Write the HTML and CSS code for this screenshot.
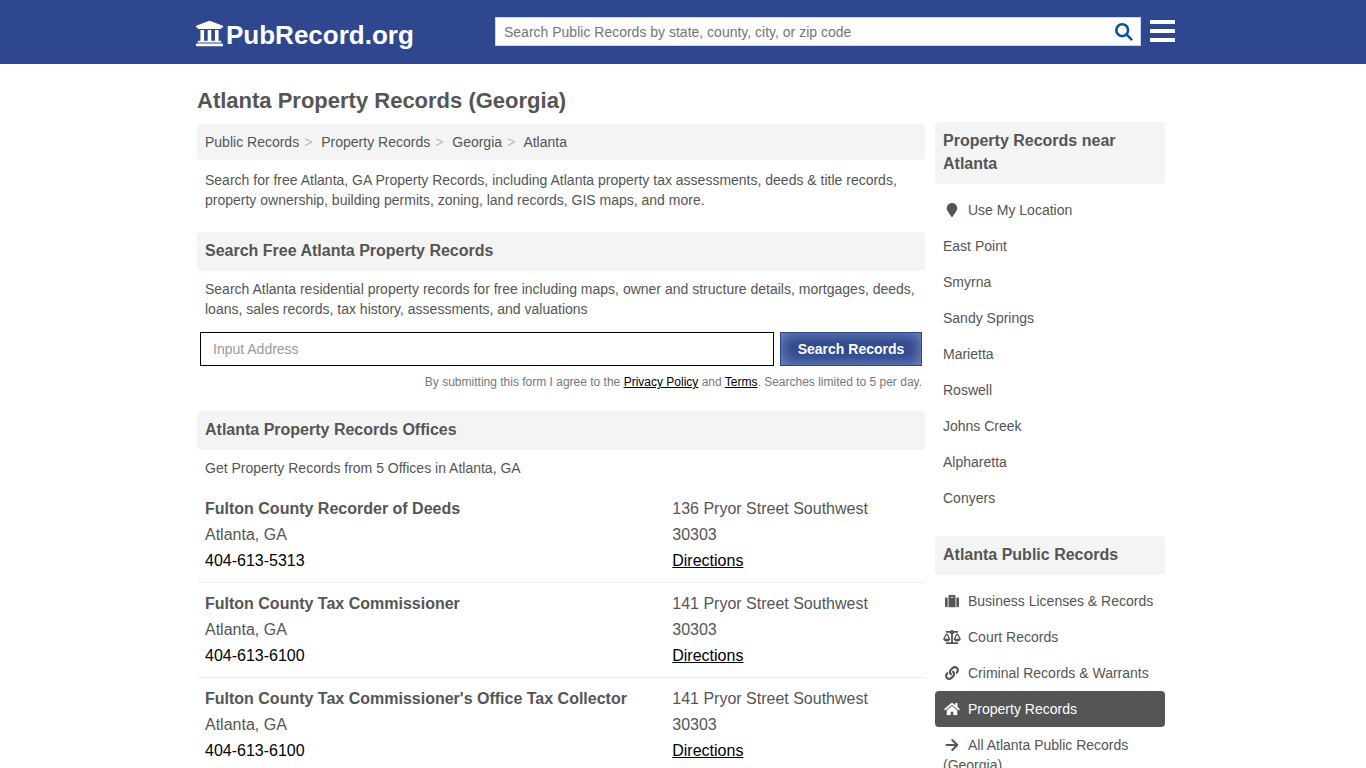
FILE: index.html
```html
<!DOCTYPE html>
<html lang="en">
<head>
<meta charset="utf-8">
<meta name="viewport" content="width=device-width, initial-scale=1">
<title>Atlanta Property Records (Georgia)</title>
<link rel="stylesheet" href="styles.css">
</head>
<body>
<header class="site-header">
  <div class="header-inner">
    <a class="logo" href="#">
      <svg class="logo-icon" viewBox="0 0 512 512" aria-hidden="true"><path d="M496 128v16a8 8 0 0 1-8 8h-24v12c0 6.627-5.373 12-12 12H60c-6.627 0-12-5.373-12-12v-12H24a8 8 0 0 1-8-8v-16a8 8 0 0 1 4.941-7.392l232-88a7.996 7.996 0 0 1 6.118 0l232 88A8 8 0 0 1 496 128zm-24 304H40c-13.255 0-24 10.745-24 24v16a8 8 0 0 0 8 8h464a8 8 0 0 0 8-8v-16c0-13.255-10.745-24-24-24zM96 192v192H60c-6.627 0-12 5.373-12 12v20h416v-20c0-6.627-5.373-12-12-12h-36V192h-64v192h-64V192h-64v192h-64V192H96z"/></svg>
      <span>PubRecord.org</span>
    </a>
    <form class="site-search" role="search">
      <input class="site-search-input" type="text" aria-label="Search public records" placeholder="Search Public Records by state, county, city, or zip code">
      <button class="site-search-button" type="button" aria-label="Search">
        <svg class="search-icon" viewBox="0 0 18 18" aria-hidden="true"><circle cx="7.2" cy="7.2" r="5.9"/><path d="M11.7 11.7l4.6 4.6"/></svg>
      </button>
    </form>
    <button class="menu-button" type="button" aria-label="Menu">
      <svg class="menu-icon" viewBox="0 0 25 22" aria-hidden="true"><rect width="25" height="4" rx=".6"/><rect y="9" width="25" height="4" rx=".6"/><rect y="18" width="25" height="4" rx=".6"/></svg>
    </button>
  </div>
</header>

<div class="page">
  <h1 class="page-title">Atlanta Property Records (Georgia)</h1>
  <div class="columns">
    <main class="content">
      <nav class="breadcrumb" aria-label="Breadcrumb">
        <a href="#">Public Records</a><span class="crumb-sep">&gt;</span>
        <a href="#">Property Records</a><span class="crumb-sep">&gt;</span>
        <a href="#">Georgia</a><span class="crumb-sep">&gt;</span>
        <a href="#">Atlanta</a>
      </nav>
      <p class="text">Search for free Atlanta, GA Property Records, including Atlanta property tax assessments, deeds &amp; title records, property ownership, building permits, zoning, land records, GIS maps, and more.</p>

      <section class="search-section">
        <h2 class="heading">Search Free Atlanta Property Records</h2>
        <p class="text">Search Atlanta residential property records for free including maps, owner and structure details, mortgages, deeds, loans, sales records, tax history, assessments, and valuations</p>
        <form class="address-form">
          <input class="address-input" type="text" aria-label="Address" placeholder="Input Address">
          <button class="address-button" type="button">Search Records</button>
        </form>
        <p class="terms">By submitting this form I agree to the <a href="#">Privacy Policy</a> and <a href="#">Terms</a>. Searches limited to 5 per day.</p>
      </section>

      <section class="offices">
        <h2 class="heading">Atlanta Property Records Offices</h2>
        <p class="text">Get Property Records from 5 Offices in Atlanta, GA</p>
        <div class="office-list">
          <article class="office">
            <div><h3 class="office-name">Fulton County Recorder of Deeds</h3><p>Atlanta, GA</p><a class="phone" href="tel:4046135313">404-613-5313</a></div>
            <div><p>136 Pryor Street Southwest</p><p>30303</p><a class="directions" href="#">Directions</a></div>
          </article>
          <article class="office">
            <div><h3 class="office-name">Fulton County Tax Commissioner</h3><p>Atlanta, GA</p><a class="phone" href="tel:4046136100">404-613-6100</a></div>
            <div><p>141 Pryor Street Southwest</p><p>30303</p><a class="directions" href="#">Directions</a></div>
          </article>
          <article class="office">
            <div><h3 class="office-name">Fulton County Tax Commissioner's Office Tax Collector</h3><p>Atlanta, GA</p><a class="phone" href="tel:4046136100">404-613-6100</a></div>
            <div><p>141 Pryor Street Southwest</p><p>30303</p><a class="directions" href="#">Directions</a></div>
          </article>
        </div>
      </section>
    </main>

    <aside class="sidebar">
      <h2 class="heading">Property Records near Atlanta</h2>
      <nav class="side-nav" aria-label="Nearby">
        <a href="#"><svg class="side-icon" viewBox="-64 0 512 512" aria-hidden="true"><path d="M172.268 501.67C26.97 291.031 0 269.413 0 192 0 85.961 85.961 0 192 0s192 85.961 192 192c0 77.413-26.97 99.031-172.268 309.67-9.535 13.774-29.93 13.773-39.464 0z"/></svg>Use My Location</a>
        <a href="#">East Point</a>
        <a href="#">Smyrna</a>
        <a href="#">Sandy Springs</a>
        <a href="#">Marietta</a>
        <a href="#">Roswell</a>
        <a href="#">Johns Creek</a>
        <a href="#">Alpharetta</a>
        <a href="#">Conyers</a>
      </nav>
      <h2 class="heading">Atlanta Public Records</h2>
      <nav class="side-nav" aria-label="Record types">
        <a href="#"><svg class="side-icon" viewBox="0 0 512 512" aria-hidden="true"><path d="M128 480h256V80c0-26.5-21.5-48-48-48H176c-26.5 0-48 21.5-48 48v400zm64-384h128v32H192V96zm320 80v256c0 26.5-21.5 48-48 48h-48V128h48c26.5 0 48 21.5 48 48zM96 480H48c-26.5 0-48-21.5-48-48V176c0-26.5 21.5-48 48-48h48v352z"/></svg>Business Licenses &amp; Records</a>
        <a href="#"><svg class="side-icon" viewBox="0 0 640 512" aria-hidden="true"><path d="M256 336h-.02c0-16.18 1.34-8.73-85.05-181.51-17.65-35.29-68.19-35.36-85.87 0C-2.06 328.75.02 320.33.02 336H0c0 44.18 57.31 80 128 80s128-35.82 128-80zM128 176l72 144H56l72-144zm511.98 160c0-16.18 1.34-8.73-85.05-181.51-17.65-35.29-68.19-35.36-85.87 0-87.12 174.26-85.04 165.84-85.04 181.51H384c0 44.18 57.31 80 128 80s128-35.82 128-80h-.02zM440 320l72-144 72 144H440zm88 128H352V153.25c23.51-10.29 41.16-31.48 46.39-57.25H528c8.84 0 16-7.16 16-16V48c0-8.84-7.16-16-16-16H383.64C369.04 12.68 346.09 0 320 0s-49.04 12.68-63.64 32H112c-8.84 0-16 7.16-16 16v32c0 8.84 7.16 16 16 16h129.61c5.23 25.76 22.87 46.96 46.39 57.25V448H112c-8.84 0-16 7.16-16 16v32c0 8.84 7.16 16 16 16h416c8.84 0 16-7.16 16-16v-32c0-8.84-7.16-16-16-16z"/></svg>Court Records</a>
        <a href="#"><svg class="side-icon" viewBox="0 0 512 512" aria-hidden="true"><path d="M326.612 185.391c59.747 59.809 58.927 155.698.36 214.59-.11.12-.24.25-.36.37l-67.2 67.2c-59.27 59.27-155.699 59.262-214.96 0-59.27-59.26-59.27-155.7 0-214.96l37.106-37.106c9.84-9.84 26.786-3.3 27.294 10.606.648 17.722 3.826 35.527 9.69 52.721 1.986 5.822.567 12.262-3.783 16.612l-13.087 13.087c-28.026 28.026-28.905 73.66-1.155 101.96 28.024 28.579 74.086 28.749 102.325.51l67.2-67.19c28.191-28.191 28.073-73.757 0-101.83-3.701-3.694-7.429-6.564-10.341-8.569a16.037 16.037 0 0 1-6.947-12.606c-.396-10.567 3.348-21.456 11.698-29.806l21.054-21.055c5.521-5.521 14.182-6.199 20.584-1.731a152.482 152.482 0 0 1 20.522 17.197zM467.547 44.449c-59.261-59.262-155.69-59.27-214.96 0l-67.2 67.2c-.12.12-.25.25-.36.37-58.566 58.892-59.387 154.781.36 214.59a152.454 152.454 0 0 0 20.521 17.196c6.402 4.468 15.064 3.789 20.584-1.731l21.054-21.055c8.35-8.35 12.094-19.239 11.698-29.806a16.037 16.037 0 0 0-6.947-12.606c-2.912-2.005-6.64-4.875-10.341-8.569-28.073-28.073-28.191-73.639 0-101.83l67.2-67.19c28.239-28.239 74.3-28.069 102.325.51 27.75 28.3 26.872 73.934-1.155 101.96l-13.087 13.087c-4.35 4.35-5.769 10.79-3.783 16.612 5.864 17.194 9.042 34.999 9.69 52.721.509 13.906 17.454 20.446 27.294 10.606l37.106-37.106c59.271-59.259 59.271-155.699.001-214.959z"/></svg>Criminal Records &amp; Warrants</a>
        <a class="active" href="#"><svg class="side-icon" viewBox="0 0 576 512" aria-hidden="true"><path d="M280.37 148.26L96 300.11V464a16 16 0 0 0 16 16l112.06-.29a16 16 0 0 0 15.92-16V368a16 16 0 0 1 16-16h64a16 16 0 0 1 16 16v95.64a16 16 0 0 0 16 16.05L464 480a16 16 0 0 0 16-16V300L295.67 148.26a12.19 12.19 0 0 0-15.3 0zM571.6 251.47L488 182.56V44.05a12 12 0 0 0-12-12h-56a12 12 0 0 0-12 12v72.61L318.47 43a48 48 0 0 0-61 0L4.34 251.47a12 12 0 0 0-1.6 16.9l25.5 31A12 12 0 0 0 45.15 301l235.22-193.74a12.19 12.19 0 0 1 15.3 0L530.9 301a12 12 0 0 0 16.9-1.6l25.5-31a12 12 0 0 0-1.7-16.93z"/></svg>Property Records</a>
        <a href="#"><svg class="side-icon arrow-icon" viewBox="0 0 14 14" aria-hidden="true"><path d="M1.5 7h10.5M7.3 2l5 5-5 5"/></svg>All Atlanta Public Records (Georgia)</a>
      </nav>
    </aside>
  </div>
</div>
</body>
</html>
```
FILE: styles.css
```css
* {
  box-sizing: border-box;
}

body {
  margin: 0;
  background: #fff;
  color: #555;
  font-family: "Liberation Sans", Arial, sans-serif;
  font-size: 14px;
  line-height: 20px;
}

h1, h2, h3, p {
  margin: 0;
}

a {
  color: inherit;
  text-decoration: none;
}

input, button {
  font-family: inherit;
  font-size: 14px;
}

button {
  cursor: pointer;
}

.site-header {
  background: #2e478e;
}

.header-inner {
  display: flex;
  align-items: center;
  max-width: 984px;
  min-height: 64px;
  margin: 0 auto;
  padding: 0 0 2px 4px;
}

.logo {
  display: flex;
  align-items: center;
  gap: 2px;
  width: 300px;
  padding-top: 8px;
  color: #fff;
  font-size: 26px;
  font-weight: bold;
  line-height: 30px;
}

.logo-icon {
  width: 29px;
  height: 29px;
  margin-bottom: 4px;
  fill: currentColor;
}

.site-search {
  display: flex;
  flex: 1;
  height: 29px;
  border: 1px solid #c5d6f0;
  background: #fff;
}

.site-search-input {
  flex: 1;
  min-width: 0;
  padding: 2px 8px 0;
  border: 0;
  background: none;
}

.site-search-input::placeholder {
  color: #757575;
}

.site-search-button {
  display: flex;
  align-items: center;
  padding: 2px 7px 0;
  border: 0;
  background: none;
}

.search-icon {
  width: 18px;
  height: 18px;
  fill: none;
  stroke: #0b529c;
  stroke-width: 2.6;
  stroke-linecap: round;
}

.menu-button {
  display: flex;
  margin-left: 9px;
  padding: 0;
  border: 0;
  background: none;
}

.menu-icon {
  width: 25px;
  height: 22px;
  fill: #fff;
}

.page {
  max-width: 984px;
  margin: 0 auto;
  padding: 22px 10px 0 6px;
}

.page-title {
  padding-bottom: 6px;
  font-size: 22px;
  line-height: 30px;
}

.columns {
  display: flex;
  align-items: flex-start;
  gap: 10px;
}

.content {
  flex: 1;
  min-width: 0;
  padding-top: 2px;
}

.breadcrumb {
  padding: 8px;
  border-radius: 4px;
  background: #f4f4f4;
}

.crumb-sep {
  margin: 0 5px;
  color: #bbb;
}

.text {
  padding: 10px 8px 0;
}

.heading {
  padding: 7px 8px 9px;
  border-radius: 4px;
  background: #f4f4f4;
  font-size: 16px;
  line-height: 23px;
}

.search-section {
  margin-top: 22px;
}

.search-section .text,
.offices .text {
  padding-top: 8px;
}

.address-form {
  display: flex;
  gap: 6px;
  padding: 13px 3px 0;
}

.address-input {
  flex: 1;
  min-width: 0;
  height: 34px;
  padding: 0 12px;
  border: 1px solid #000;
}

.address-input::placeholder {
  color: #999;
}

.address-button {
  width: 142px;
  height: 34px;
  padding: 0;
  border: 1px solid #2e478e;
  background: #2e478e;
  box-shadow: inset 0 0 16px #8292c4;
  color: #fff;
  font-weight: bold;
}

.terms {
  padding: 6px 3px 0;
  color: #777;
  font-size: 12px;
  text-align: right;
}

.terms a {
  color: #000;
  text-decoration: underline;
}

.offices {
  margin-top: 19px;
}

.office-list {
  padding-top: 10px;
}

.office {
  display: grid;
  grid-template-columns: 21fr 11fr;
  padding: 8px;
  border-bottom: 1px solid #eee;
  font-size: 16px;
  line-height: 26px;
}

.office-name {
  font-size: 16px;
}

.phone,
.directions {
  color: #000;
}

.directions {
  text-decoration: underline;
}

.sidebar {
  flex: 0 0 230px;
}

.side-nav {
  padding: 8px 0 20px;
}

.side-nav a {
  display: block;
  padding: 8px;
  border-radius: 4px;
}

.side-nav .active {
  background: #555;
  color: #fff;
}

.side-icon {
  width: 18px;
  height: 14px;
  margin-right: 7px;
  vertical-align: -2px;
  fill: currentColor;
}

.arrow-icon {
  fill: none;
  stroke: currentColor;
  stroke-width: 2;
  stroke-linecap: round;
  stroke-linejoin: round;
}
```
